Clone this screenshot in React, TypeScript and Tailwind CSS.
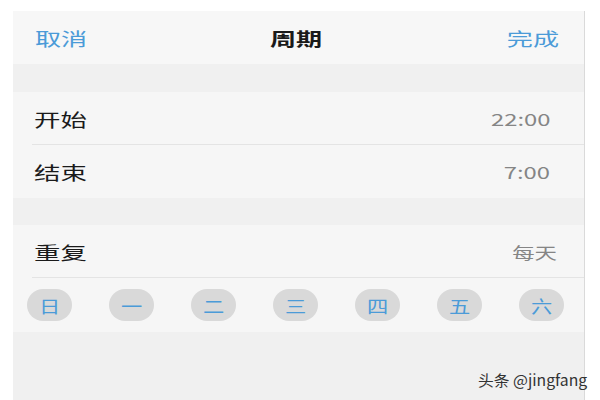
import React from "react"

const font = { fontFamily: '"Noto Sans CJK SC", "Noto Sans", sans-serif' }

const days = ["日", "一", "二", "三", "四", "五", "六"]

// the source screenshot is stretched sideways, so text gets a horizontal scale
function Row({ label, value, valueClass, divider }: { label: string; value: string; valueClass: string; divider?: boolean }) {
  return (
    <div className="relative h-[53px] bg-[#f6f6f6] flex items-center justify-between pl-[21px]">
      <span className="inline-block origin-left scale-x-[1.47] text-[18px] leading-none text-[#1a1a1a]">{label}</span>
      <span className={`inline-block origin-right leading-none text-[#858585] ${valueClass}`}>{value}</span>
      {divider && <div className="absolute left-[19px] right-0 bottom-0 h-px bg-[#e4e4e4]" />}
    </div>
  )
}

export default function App() {
  return (
    <div className="relative w-[600px] h-[400px] bg-white overflow-hidden pt-[11px] pl-[13px]" style={font}>
      <div className="w-[572px] h-[389px] bg-[#f0f0f0] border-r border-[#dadada] flex flex-col">
        {/* Header */}
        <div className="h-[53px] bg-[#f7f7f7] flex items-center justify-between pl-[22px] pr-[25px]">
          <span className="inline-block origin-left scale-x-[1.45] text-[18px] leading-none text-[#4b9bd8]">取消</span>
          <span className="inline-block scale-x-[1.45] text-[18px] font-bold leading-none text-[#1a1a1a] mr-[2px]">周期</span>
          <span className="inline-block origin-right scale-x-[1.45] text-[18px] leading-none text-[#4b9bd8]">完成</span>
        </div>

        <div className="h-[28px]" />

        <Row label="开始" value="22:00" valueClass="mr-[34px] scale-x-[1.4] text-[17px]" divider />
        <Row label="结束" value="7:00" valueClass="mr-[34px] scale-x-[1.4] text-[17px]" />

        <div className="h-[27px]" />

        <Row label="重复" value="每天" valueClass="mr-[27px] scale-x-[1.4] text-[16px]" divider />

        {/* Weekdays */}
        <div className="h-[54px] bg-[#f6f6f6] flex items-center gap-[37px] pl-[14px]">
          {days.map((d) => (
            <div key={d} className="w-[45px] h-[32px] rounded-full bg-[#d9d9d9] flex items-center justify-center">
              <span className="inline-block scale-x-[1.25] text-[17px] leading-none text-[#4b9bd8]">{d}</span>
            </div>
          ))}
        </div>
      </div>

      {/* Watermark */}
      <div className="absolute left-[478px] top-[369px] origin-left scale-x-[1.05] text-[15px] text-[#333]">头条 @jingfang</div>
    </div>
  )
}
